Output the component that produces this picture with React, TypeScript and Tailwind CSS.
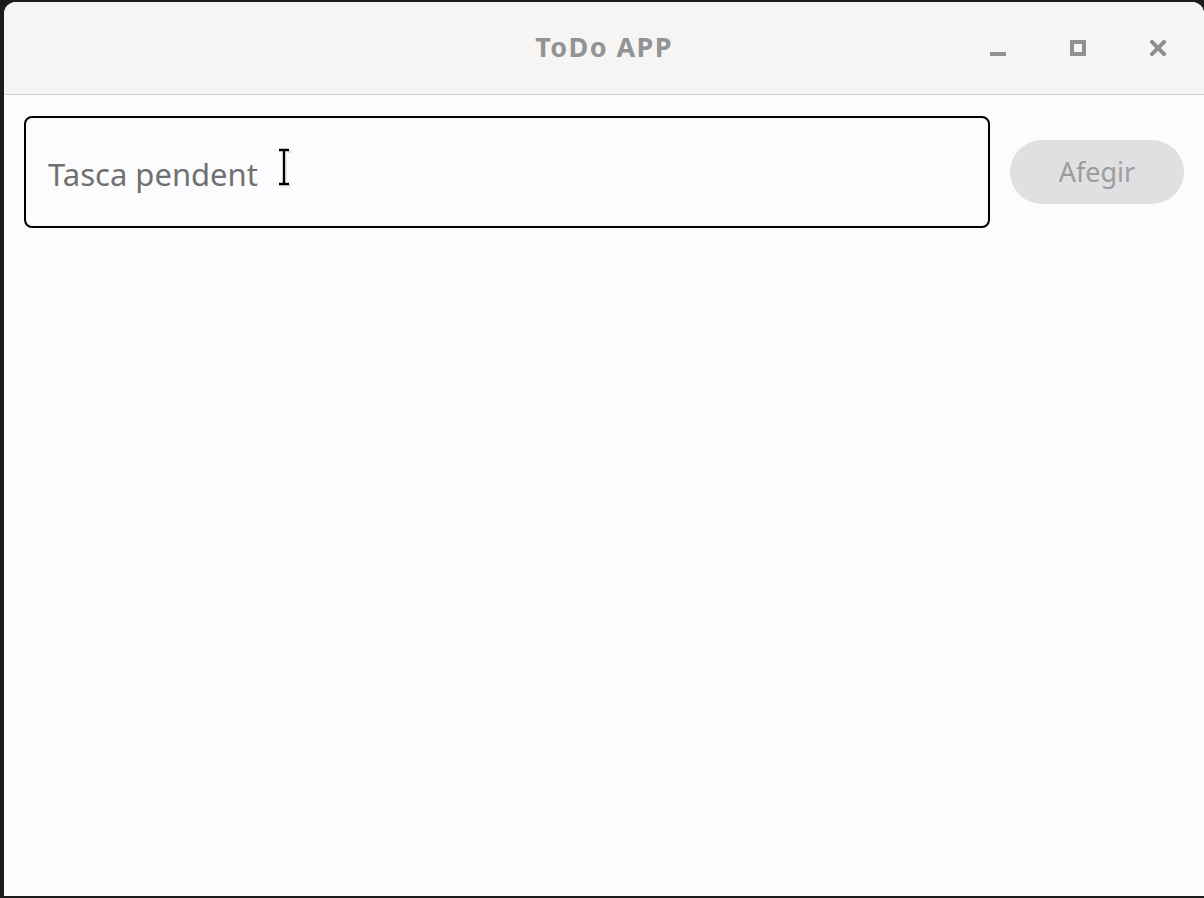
import { useState } from 'react';

function IBeam() {
  return (
    <svg width="16" height="42" viewBox="0 0 16 42" className="absolute left-[273px] top-[145px] pointer-events-none">
      <g stroke="#bdbdbd" strokeWidth="3" transform="translate(1.5,1.5)" opacity="0.6">
        <path d="M2 3h10M2 37h10M7 3v34" />
      </g>
      <g stroke="#ffffff" strokeWidth="5">
        <path d="M2 3h10M2 37h10M7 3v34" />
      </g>
      <g stroke="#000000" strokeWidth="2.4">
        <path d="M2 3h10M2 37h10M7 3v34" />
      </g>
    </svg>
  );
}

export default function App() {
  const [task, setTask] = useState('');

  return (
    <div className="w-[1204px] h-[898px] bg-[#1c1c1c] pt-[2px] pl-[4px] pb-[2px] overflow-hidden" style={{ fontFamily: '"Noto Sans", "Open Sans", sans-serif' }}>
      <div className="relative flex flex-col h-full rounded-t-[12px] overflow-hidden bg-[#fcfcfe]">
        {/* Header bar */}
        <div className="relative flex items-center justify-center h-[93px] shrink-0 bg-[#f6f5f4] border-b border-[#d6d1cd]">
          <span className="text-[27px] font-bold tracking-[1.4px] text-[#919395] -mt-[2px]">ToDo APP</span>
          <div className="absolute right-[6px] top-0 h-full flex items-center">
            <button className="w-[80px] h-full flex items-center justify-center">
              <svg width="16" height="16" viewBox="0 0 16 16">
                <rect x="0" y="12" width="16" height="4" fill="#8e9193" />
              </svg>
            </button>
            <button className="w-[80px] h-full flex items-center justify-center">
              <svg width="16" height="16" viewBox="0 0 16 16">
                <rect x="2" y="2" width="12" height="12" fill="none" stroke="#8e9193" strokeWidth="4" />
              </svg>
            </button>
            <button className="w-[80px] h-full flex items-center justify-center">
              <svg width="16" height="16" viewBox="0 0 16 16">
                <path d="M2 2l12 12M14 2L2 14" stroke="#8e9193" strokeWidth="4" strokeLinecap="square" />
              </svg>
            </button>
          </div>
        </div>

        {/* Content */}
        <div className="flex items-center gap-[20px] pl-[20px] pr-[20px] pt-[21px]">
          <input
            value={task}
            onChange={(e) => setTask(e.target.value)}
            placeholder="Tasca pendent"
            className="w-[966px] h-[112px] border-2 border-black rounded-[8px] px-[22px] pt-[4px] text-[31px] text-[#333] bg-transparent outline-none placeholder:text-[#707070]"
          />
          <button className="w-[174px] h-[64px] rounded-full bg-[#e0e0e3] text-[27px] text-[#9c9c9f]">
            Afegir
          </button>
        </div>

        <IBeam />
      </div>
    </div>
  );
}
